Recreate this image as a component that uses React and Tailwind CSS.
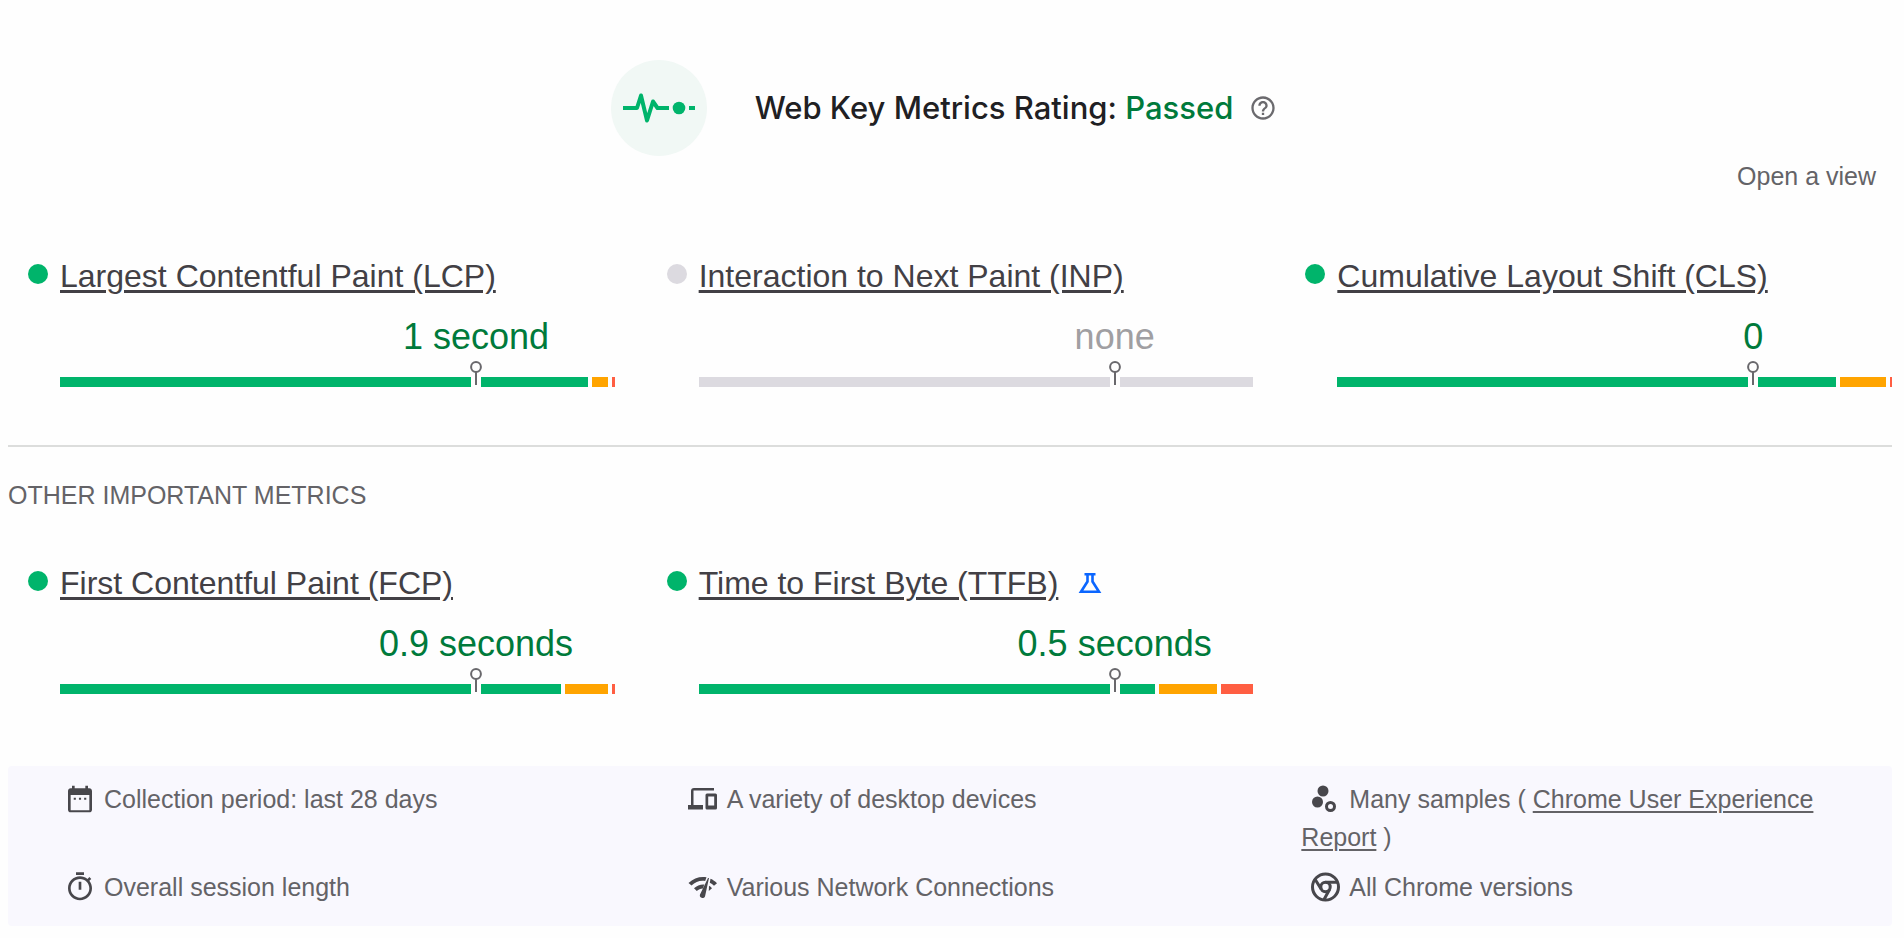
import React from 'react';

const coreMetrics = [
  {
    name: 'Largest Contentful Paint (LCP)',
    value: '1 second',
    status: 'good',
    segments: [528, 16, 3],
  },
  {
    name: 'Interaction to Next Paint (INP)',
    value: 'none',
    status: 'none',
    segments: [],
  },
  {
    name: 'Cumulative Layout Shift (CLS)',
    value: '0',
    status: 'good',
    segments: [499, 46, 2],
  },
];

const otherMetrics = [
  {
    name: 'First Contentful Paint (FCP)',
    value: '0.9 seconds',
    status: 'good',
    segments: [501, 43, 3],
  },
  {
    name: 'Time to First Byte (TTFB)',
    value: '0.5 seconds',
    status: 'good',
    segments: [456, 58, 32],
    experimental: true,
  },
];

const segmentColors = ['bg-[#00b46b]', 'bg-[#ffa400]', 'bg-[#ff5e42]'];

const PulseIcon = () => (
  <svg viewBox="0 0 96 96" className="h-24 w-24 shrink-0" aria-hidden="true">
    <circle cx="48" cy="48" r="48" fill="#f1f8f5" />
    <path
      d="M12 48h14l4-12.500l6 25 6-19 4.500 6.500h11.500"
      fill="none"
      stroke="#00b46b"
      strokeWidth="4"
      strokeLinejoin="round"
    />
    <circle cx="68" cy="48" r="6.300" fill="#00b46b" />
    <path d="M78 48h6" stroke="#00b46b" strokeWidth="4" />
  </svg>
);

const HelpIcon = () => (
  <svg viewBox="0 0 24 24" className="h-7 w-7" fill="#6b6a6e" aria-hidden="true">
    <path d="M11 18h2v-2h-2v2zm1-16C6.480 2 2 6.480 2 12s4.480 10 10 10 10-4.480 10-10S17.520 2 12 2zm0 18c-4.410 0-8-3.590-8-8s3.590-8 8-8 8 3.590 8 8-3.590 8-8 8zm0-14c-2.210 0-4 1.790-4 4h2c0-1.100.9-2 2-2s2 .9 2 2c0 2-3 1.750-3 5h2c0-2.250 3-2.500 3-5 0-2.210-1.790-4-4-4z" />
  </svg>
);

const FlaskIcon = () => (
  <svg viewBox="0 0 24 22" className="h-[22px] w-6" fill="none" stroke="#0b66ff" strokeWidth="2.600" aria-hidden="true">
    <path d="M6.500 2.300h11M9.500 2v7.500L3 19.700h18L14.500 9.500V2" />
  </svg>
);

const iconClass = 'mx-2 inline-block h-8 w-8 align-[-7px]';

const CalendarIcon = () => (
  <svg viewBox="0 0 24 24" className={iconClass} fill="#48474c" aria-hidden="true">
    <path d="M19 4h-1V2h-2v2H8V2H6v2H5c-1.110 0-2 .9-2 2v14c0 1.100.89 2 2 2h14c1.100 0 2-.9 2-2V6c0-1.100-.9-2-2-2zm0 16.500H5V9h14v11.500z" />
    <path d="M7.300 11h1.600v1.600H7.300zM11.200 11h1.600v1.600h-1.600zM15.100 11h1.600v1.600h-1.600z" />
  </svg>
);

const TimerIcon = () => (
  <svg viewBox="0 0 24 24" className={iconClass} fill="#48474c" aria-hidden="true">
    <path d="M15 1H9v2h6V1zm-4 13h2V8h-2v6zm8.030-6.610l1.420-1.420c-.43-.51-.9-.99-1.410-1.410l-1.420 1.420C16.070 4.740 14.120 4 12 4c-4.970 0-9 4.030-9 9s4.020 9 9 9 9-4.030 9-9c0-2.120-.74-4.070-1.970-5.610zM12 20c-3.870 0-7-3.130-7-7s3.130-7 7-7 7 3.130 7 7-3.130 7-7 7z" />
  </svg>
);

const DevicesIcon = () => (
  <svg viewBox="0 0 32 32" className={iconClass} fill="#48474c" aria-hidden="true">
    <path d="M7 5h20v2.500H6.500V22H16v4.500H1V22h3V8q0-3 3-3zM20 10.500h8.500q1.500 0 1.500 1.500v13q0 1.500-1.500 1.500H20q-1.500 0-1.500-1.500V12q0-1.500 1.500-1.500zm1.200 3v9h6v-9z" />
  </svg>
);

const NetworkIcon = () => (
  <svg viewBox="0 0 32 32" className={iconClass} fill="#48474c" aria-hidden="true">
    <path d="M1.500 12C6.500 7 13 5.200 19.500 6.200l-1.300 3.700C13 9.200 8.500 10.500 4.500 14.500zM7 17.200c3-2.700 6.500-4 10.300-3.700l-1.500 3.900c-2.300.1-4.300 1.100-6 2.600zM21 7h1l-4 18.500a2.700 2.700 0 0 1-5-2zM23.500 7.700c2.500 1 4.600 2.500 6.500 4.500l-3 2.500c-1.200-1.300-2.700-2.300-4.200-3zM22 14.700c1.200.6 2.200 1.400 3 2.500l-3.200 2.800z" />
  </svg>
);

const SamplesIcon = () => (
  <svg viewBox="0 0 32 32" className={iconClass} fill="#48474c" aria-hidden="true">
    <circle cx="14" cy="8" r="5.500" />
    <circle cx="8.500" cy="19" r="5.500" />
    <circle cx="21.500" cy="23.500" r="4" fill="none" stroke="#48474c" strokeWidth="3" />
  </svg>
);

const ChromeIcon = () => (
  <svg viewBox="0 0 32 32" className={iconClass} fill="none" stroke="#48474c" strokeWidth="3" aria-hidden="true">
    <circle cx="16.500" cy="16" r="13" />
    <circle cx="16.500" cy="16" r="4.700" />
    <path d="M16.500 11.300h11.500M12.400 18.400L6.200 8.500M20.600 18.400L15 28.500" />
  </svg>
);

const MetricBar = ({ status, segments }) => (
  <div className="relative mt-5">
    <div className="flex gap-1">
      {status === 'none' ? (
        <div className="h-[10px] flex-1 bg-[#dcdae0]" />
      ) : (
        segments.map((size, i) => (
          <div key={i} className={`h-[10px] ${segmentColors[i]}`} style={{ flex: `${size} 1 0%` }} />
        ))
      )}
    </div>
    {/* 75th percentile marker */}
    <div className="absolute bottom-0 left-3/4 flex h-[26px] w-3 -translate-x-1/2 justify-center">
      <div className="absolute bottom-0 h-[10px] w-[10px] bg-[#fefefe]" />
      <svg viewBox="0 0 12 26" className="relative h-[26px] w-3" fill="none" stroke="#69686c" strokeWidth="2" aria-hidden="true">
        <circle cx="6" cy="6" r="4.900" />
        <path d="M6 11v13" />
      </svg>
    </div>
  </div>
);

const Metric = ({ name, value, status, segments, experimental }) => (
  <article className="pl-[52px]">
    <h3 className="relative flex items-center gap-5 text-[32px] leading-10 text-[#424045]">
      <span
        className={`absolute -left-8 top-2 h-5 w-5 rounded-full ${
          status === 'good' ? 'bg-[#00b46b]' : 'bg-[#dcdae0]'
        }`}
      />
      <a href="#" className="underline decoration-[3px] underline-offset-[3px]">
        {name}
      </a>
      {experimental ? <FlaskIcon /> : null}
    </h3>
    <div className="mt-[21px] flex w-3/4 justify-end">
      <p
        className={`translate-x-1/2 whitespace-nowrap text-[36px] leading-10 ${
          status === 'good' ? 'text-[#007a3b]' : 'text-[#a09fa2]'
        }`}
      >
        {value}
      </p>
    </div>
    <MetricBar status={status} segments={segments} />
  </article>
);

const App = () => (
  <main className="min-h-screen bg-[#fefefe] pb-3 pl-2 pr-3 pt-[60px] font-['Liberation_Sans',Arial,sans-serif] text-[25px] text-[#646367]">
    <header className="flex items-center justify-center gap-12 pr-3">
      <PulseIcon />
      <div className="flex items-center gap-4">
        <h1 className="font-['Inter',sans-serif] text-[31px] font-medium leading-10 text-[#202023]">
          Web Key Metrics Rating: <span className="text-[#007a3b]">Passed</span>
        </h1>
        <button type="button" aria-label="Help">
          <HelpIcon />
        </button>
      </div>
    </header>

    <div className="flex justify-end pr-4">
      <a href="#" className="leading-10">
        Open a view
      </a>
    </div>

    <section className="mt-[60px] grid grid-cols-3 gap-8">
      {coreMetrics.map((metric) => (
        <Metric key={metric.name} {...metric} />
      ))}
    </section>

    <section className="mt-[58px] border-t-2 border-[#dcdddc] pt-7">
      <h2 className="leading-10">OTHER IMPORTANT METRICS</h2>
      <div className="mt-12 grid grid-cols-3 gap-8">
        {otherMetrics.map((metric) => (
          <Metric key={metric.name} {...metric} />
        ))}
      </div>
    </section>

    <ul className="mt-[72px] grid grid-cols-3 gap-x-20 gap-y-3 rounded bg-[#f9f8fe] px-12 pb-5 pt-[14px] leading-[38px]">
      <li>
        <CalendarIcon />
        Collection period: last 28 days
      </li>
      <li>
        <DevicesIcon />
        A variety of desktop devices
      </li>
      <li>
        <SamplesIcon />
        Many samples ({' '}
        <a href="#" className="underline decoration-2 underline-offset-[3px]">
          Chrome User Experience Report
        </a>{' '}
        )
      </li>
      <li>
        <TimerIcon />
        Overall session length
      </li>
      <li>
        <NetworkIcon />
        Various Network Connections
      </li>
      <li>
        <ChromeIcon />
        All Chrome versions
      </li>
    </ul>
  </main>
);

export default App;
